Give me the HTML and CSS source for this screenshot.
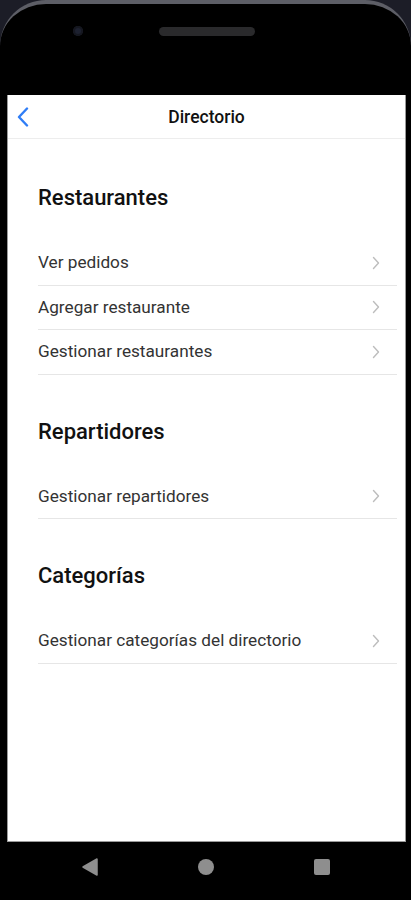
FILE: index.html
```html
<!DOCTYPE html>
<html lang="es">
<head>
<meta charset="UTF-8">
<meta name="viewport" content="width=device-width, initial-scale=1.0">
<title>Directorio</title>
<link rel="stylesheet" href="styles.css">
</head>
<body>
<div class="device">
  <div class="bezel">
    <span class="camera"></span>
    <span class="speaker"></span>
  </div>

  <div class="frame">
    <div class="screen">
      <header class="topbar">
        <button class="back" aria-label="Volver">
          <svg width="12" height="20" viewBox="0 0 12 20"><polyline points="10,1.5 2,10 10,18.5" fill="none" stroke="#2f7df6" stroke-width="2.4" stroke-linecap="round" stroke-linejoin="round"/></svg>
        </button>
        <h1>Directorio</h1>
        <span></span>
      </header>

      <main class="content">
        <section class="section">
          <h2>Restaurantes</h2>
          <ul class="list">
            <li>Ver pedidos <span class="chev"></span></li>
            <li>Agregar restaurante <span class="chev"></span></li>
            <li>Gestionar restaurantes <span class="chev"></span></li>
          </ul>
        </section>

        <section class="section">
          <h2>Repartidores</h2>
          <ul class="list">
            <li>Gestionar repartidores <span class="chev"></span></li>
          </ul>
        </section>

        <section class="section">
          <h2>Categorías</h2>
          <ul class="list">
            <li>Gestionar categorías del directorio <span class="chev"></span></li>
          </ul>
        </section>
      </main>
    </div>
  </div>

  <nav class="sysnav">
    <svg width="16" height="18" viewBox="0 0 16 18"><polygon points="15,1 15,17 1,9" fill="#8e8e8e" stroke="#8e8e8e" stroke-width="1.5" stroke-linejoin="round"/></svg>
    <span class="home"></span>
    <span class="recents"></span>
  </nav>
</div>

<script>
  // draw the small grey chevrons at the end of each row
  document.querySelectorAll(".chev").forEach(el => {
    el.innerHTML = '<svg width="8" height="14" viewBox="0 0 8 14"><polyline points="1.5,1.5 6.5,7 1.5,12.5" fill="none" stroke="#bdbdbd" stroke-width="1.4" stroke-linecap="round" stroke-linejoin="round"/></svg>';
  });
</script>
</body>
</html>
```

FILE: styles.css
```css
html, body {
  margin: 0;
  padding: 0;
  background: #000;
}

body {
  font-family: Roboto, "Noto Sans", Arial, sans-serif;
  width: 411px;
  height: 900px;
  overflow: hidden;
}

.device {
  background: #1c1d27;
}

/* top part of the phone */
.bezel {
  height: 95px;
  box-sizing: border-box;
  background: #000;
  border-top: 4px solid #5d5e66;
  border-radius: 46px 46px 0 0;
  padding-top: 19px;
  display: flex;
  align-items: flex-start;
}

.camera {
  width: 10px;
  height: 10px;
  border-radius: 50%;
  background: #1d2130;
  margin: 3px 0 0 73px;
  box-shadow: inset 0 0 0 2px #15171f;
}

.speaker {
  width: 96px;
  height: 9px;
  border-radius: 5px;
  background: #2a2a2c;
  margin: 4px 0 0 76px;
}

.frame {
  background: #000;
  padding: 0 5px 0 7px;
}

.screen {
  height: 747px;
  box-sizing: border-box;
  background: #fff;
  border: 1px solid #9a9a9a;
  border-top: none;
  overflow: hidden;
}

.topbar {
  height: 44px;
  box-sizing: border-box;
  display: grid;
  grid-template-columns: 44px 1fr 44px;
  align-items: center;
  border-bottom: 1px solid #ededed;
}

.back {
  border: none;
  background: none;
  padding: 0 0 0 9px;
  display: flex;
  align-items: center;
  cursor: pointer;
}

.topbar h1 {
  margin: 0;
  text-align: center;
  font-size: 17.5px;
  font-weight: 500;
  color: #111;
}

.content {
  padding: 45px 8px 0 30px;
}

.section {
  margin-bottom: 43px;
}

.section h2 {
  margin: 0 0 29px;
  font-size: 22px;
  line-height: 28px;
  font-weight: 500;
  color: #111;
}

.list {
  list-style: none;
  margin: 0;
  padding: 0;
}

.list li {
  display: flex;
  align-items: center;
  justify-content: space-between;
  padding: 12px 0;
  line-height: 19.5px;
  font-size: 17.2px;
  color: #333;
  border-bottom: 1px solid #e6e6e6;
}

.chev {
  display: flex;
  margin-right: 17px;
}

/* android navigation buttons */
.sysnav {
  height: 58px;
  box-sizing: border-box;
  background: #000;
  display: flex;
  justify-content: center;
  align-items: center;
  gap: 100px;
  padding: 0 0 9px 0;
}

.home {
  width: 16px;
  height: 16px;
  border-radius: 50%;
  background: #8e8e8e;
}

.recents {
  width: 16px;
  height: 16px;
  border-radius: 2px;
  background: #8e8e8e;
}
```
